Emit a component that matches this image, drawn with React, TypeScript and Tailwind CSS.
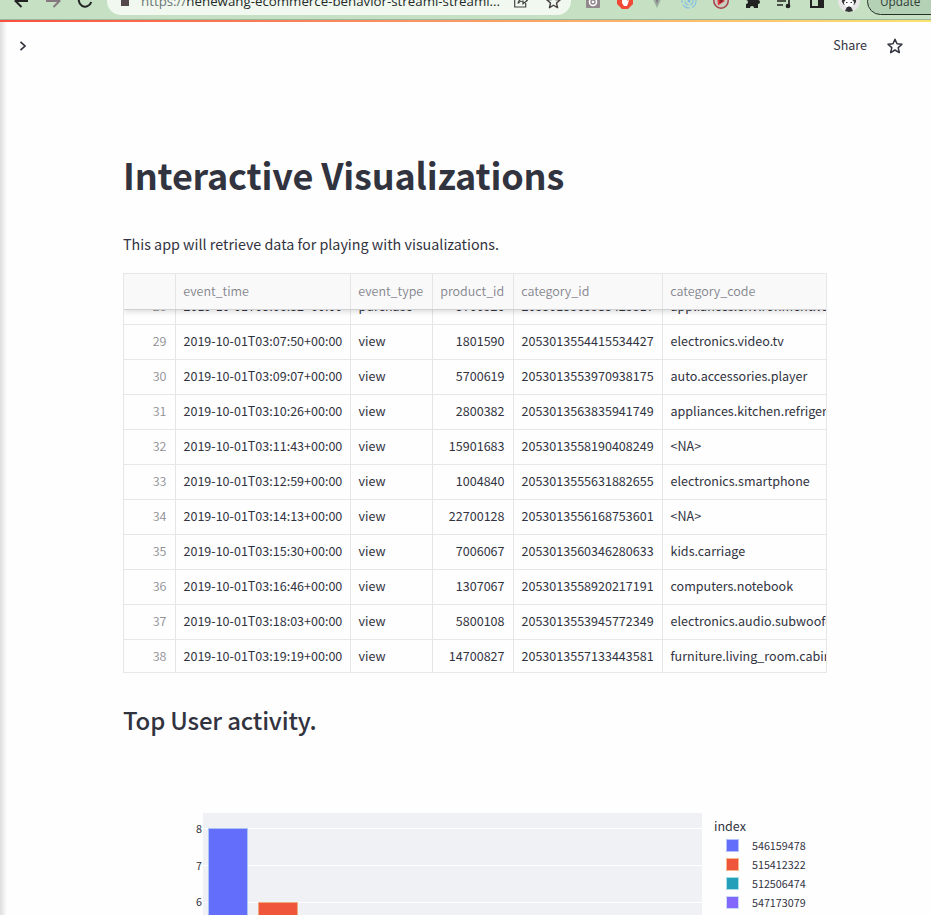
import React from "react";

const rows = [
  ["28", "2019-10-01T03:06:32+00:00", "purchase", "3700926", "2053013565983425517", "appliances.environment.vacuum"],
  ["29", "2019-10-01T03:07:50+00:00", "view", "1801590", "2053013554415534427", "electronics.video.tv"],
  ["30", "2019-10-01T03:09:07+00:00", "view", "5700619", "2053013553970938175", "auto.accessories.player"],
  ["31", "2019-10-01T03:10:26+00:00", "view", "2800382", "2053013563835941749", "appliances.kitchen.refrigerators"],
  ["32", "2019-10-01T03:11:43+00:00", "view", "15901683", "2053013558190408249", "<NA>"],
  ["33", "2019-10-01T03:12:59+00:00", "view", "1004840", "2053013555631882655", "electronics.smartphone"],
  ["34", "2019-10-01T03:14:13+00:00", "view", "22700128", "2053013556168753601", "<NA>"],
  ["35", "2019-10-01T03:15:30+00:00", "view", "7006067", "2053013560346280633", "kids.carriage"],
  ["36", "2019-10-01T03:16:46+00:00", "view", "1307067", "2053013558920217191", "computers.notebook"],
  ["37", "2019-10-01T03:18:03+00:00", "view", "5800108", "2053013553945772349", "electronics.audio.subwoofer"],
  ["38", "2019-10-01T03:19:19+00:00", "view", "14700827", "2053013557133443581", "furniture.living_room.cabinet"],
];

const legend = [
  ["546159478", "bg-[#636efa] border-[#b5c3fa]"],
  ["515412322", "bg-[#ef553b] border-[#f6b98c]"],
  ["512506474", "bg-[#239fba] border-[#a9dfe8]"],
  ["547173079", "bg-[#8269fb] border-[#c8dcfa]"],
];

const columns = "grid grid-cols-[52px_175px_82px_81px_149px_164px]";

function Star({ className }: { className: string }) {
  return (
    <svg viewBox="0 0 16 16" className={className} fill="none" stroke="currentColor" strokeWidth="1.5" strokeLinejoin="round">
      <path d="M8 1.2 10 5.8 15 6.3 11.2 9.6 12.3 14.6 8 12 3.7 14.6 4.8 9.6 1 6.3 6 5.8Z" />
    </svg>
  );
}

function BrowserBar() {
  return (
    <header className="flex h-[19px] items-end overflow-hidden bg-[#c5e0c3]">
      <div className="flex h-9 w-full shrink-0 items-center">
        <svg className="ml-[13px] h-4 w-4 shrink-0 text-[#222]" viewBox="0 0 16 16" fill="none" stroke="currentColor" strokeWidth="2">
          <path d="M15 8H3M8.5 2 2.5 8l6 6" />
        </svg>
        <svg className="ml-[17px] h-4 w-4 shrink-0 text-[#85797f]" viewBox="0 0 16 16" fill="none" stroke="currentColor" strokeWidth="2">
          <path d="M0 8h13M7.5 2l6 6-6 6" />
        </svg>
        <svg className="ml-[15px] h-4 w-4 shrink-0 text-[#222]" viewBox="0 0 16 16" fill="none" stroke="currentColor" strokeWidth="2">
          <path d="M13.5 4A6.3 6.3 0 1 0 14.2 9M14 0v5H9" />
        </svg>
        <div className="ml-[14px] flex h-7 w-[464px] shrink-0 items-center rounded-full bg-[#f0f8ef]">
          <svg className="ml-[14px] h-[14px] w-2 shrink-0 text-[#55484b]" viewBox="0 0 8 14">
            <path d="M0 5h8v7H0z" fill="currentColor" />
            <path d="M1.500 5V3a2.500 2.500 0 0 1 5 0V5" fill="none" stroke="currentColor" />
          </svg>
          <span className="ml-3 w-[360px] shrink-0 whitespace-nowrap font-['Open_Sans',sans-serif] text-[13.3px] leading-7 text-[#252a2a]">
            <span className="text-[#6b7775]">https://</span>nenewang-ecommerce-behavior-streaml-streaml...
          </span>
          <svg className="ml-[13px] h-[14px] w-[14px] shrink-0 text-[#444]" viewBox="0 0 14 14" fill="none" stroke="currentColor" strokeWidth="1.2">
            <path d="M4 3H.7v10h11V9M4 9.5c.5-3 2.5-4.5 5-4.5V2l4.2 4.5L9 9.8V7c-2.300 0-3.700.7-5 2.500Z" />
          </svg>
          <Star className="ml-[18px] h-[15px] w-[15px] shrink-0 text-[#443d40]" />
        </div>
        <svg className="ml-[15px] h-[14px] w-[14px] shrink-0" viewBox="0 0 14 14">
          <rect width="14" height="14" rx="1" fill="#91878d" />
          <circle cx="7" cy="8" r="3.5" fill="none" stroke="#fff" strokeWidth="1.500" />
          <circle cx="7" cy="8" r="1.300" fill="#fff" />
        </svg>
        <svg className="ml-[17px] h-4 w-4 shrink-0" viewBox="0 0 16 16">
          <path d="M5 0h6l5 5v6l-5 5H5l-5-5V5Z" fill="#ef4a36" />
          <path d="M5 10V3h1v4h1V2h1v5h1V3h1v5l1-1 1 .5-2 5.500H7Z" fill="#fff" />
        </svg>
        <svg className="ml-4 h-4 w-4 shrink-0" viewBox="0 0 16 16">
          <path d="M3 4h10l-5 11Z" fill="#9cad9e" />
          <path d="M6 4h4L8 11Z" fill="#807883" />
        </svg>
        <svg className="ml-4 h-4 w-4 shrink-0" viewBox="0 0 16 16" fill="none" stroke="#86c2df" strokeWidth="1.200">
          <circle cx="8" cy="8" r="7" strokeDasharray="8 2" />
          <circle cx="8" cy="8" r="4" strokeDasharray="5 1.500" />
          <circle cx="8" cy="8" r="1" fill="#397fad" />
        </svg>
        <svg className="ml-4 h-4 w-4 shrink-0" viewBox="0 0 16 16">
          <circle cx="8" cy="8" r="7.200" fill="#c9cfc0" stroke="#a8404a" strokeWidth="1.500" />
          <path d="m4 3 8 5-7 4.500Z" fill="#e23c40" />
          <path d="m6.500 5 4 3-4 2.500Z" fill="#8a222b" />
        </svg>
        <svg className="ml-4 h-4 w-4 shrink-0 text-[#222]" viewBox="0 0 16 16" fill="currentColor">
          <path d="M1 3h4a2 2 0 1 1 4 0h4v4a2 2 0 1 1 0 4v4H9a2 2 0 0 0-4 0H1v-4a2 2 0 0 0 0-4Z" />
        </svg>
        <svg className="ml-4 h-4 w-4 shrink-0 text-[#222]" viewBox="0 0 16 16" fill="none" stroke="currentColor" strokeWidth="1.700">
          <path d="M0 4h9M0 8h9M0 12h6M12 13V3h3" />
          <circle cx="11" cy="13" r="1.500" fill="currentColor" />
        </svg>
        <svg className="ml-[17px] h-[14px] w-[14px] shrink-0 text-[#222]" viewBox="0 0 14 14">
          <path d="M1 1h12v12H1z" fill="none" stroke="currentColor" strokeWidth="2" />
          <path d="M8 1h5v12H8z" fill="currentColor" />
        </svg>
        <svg className="ml-[14px] h-[22px] w-[22px] shrink-0" viewBox="0 0 22 22">
          <circle cx="11" cy="11" r="11" fill="#e8e5e7" />
          <path d="M4 12c-1-11 15-11 14 0l-2 3H6Z" fill="#37383b" />
          <ellipse cx="11" cy="13" rx="5" ry="4" fill="#fff" />
          <path d="m7 21 2-4h4l2 4-4 1Z" fill="#303135" />
          <path d="M8 12.500h1.500M12.500 12.500h1.500M11 16v3" stroke="#303135" fill="none" />
        </svg>
        <div className="ml-[7px] flex h-[27px] w-24 shrink-0 items-center rounded-full border border-[#263028] bg-[#b4d1b5] pl-3 pt-px font-['Open_Sans',sans-serif] text-[11.8px] text-[#303b35]">
          Update
        </div>
      </div>
    </header>
  );
}

function DataTable() {
  return (
    <div className="mt-[17px] h-[400px] w-[704px] overflow-hidden border border-[#e6e7e8] text-[12.54px] text-[#31333f]">
      <div className={`${columns} relative z-10 h-9 border-b border-[#d0d0d2] bg-[#f9f9fa] font-[350] leading-[33px] text-[#85868d] shadow-[0_2px_5px_rgba(0,0,0,0.13)]`}>
        {["", "event_time", "event_type", "product_id", "category_id", "category_code"].map((name, i) => (
          <div key={name} className={`overflow-hidden whitespace-nowrap pl-[7.200px] ${i < 5 ? "border-r border-[#e4e5e7]" : ""}`}>{name}</div>
        ))}
      </div>
      <div className="-mt-5">
        {rows.map((row) => (
          <div key={row[0]} className={`${columns} h-[35px] border-b border-[#e6e7e8] leading-8`}>
            {row.map((cell, i) => (
              <div
                key={i}
                className={`overflow-hidden whitespace-nowrap ${i === 0 || i === 3 ? "pr-[8.5px] text-right" : "pl-[7.5px]"} ${i === 0 ? "font-[350] text-[#8d8e94]" : ""} ${i < 5 ? "border-r border-[#e4e5e7]" : ""}`}
              >
                {cell}
              </div>
            ))}
          </div>
        ))}
      </div>
    </div>
  );
}

function ActivityChart() {
  return (
    <div className="mt-[75px] flex h-[103px] text-[10.74px] text-[#31333f]">
      <div className="w-[80px] pr-px pt-[7px] text-right leading-[18px]">
        <div className="h-[37px]">8</div>
        <div className="h-9">7</div>
        <div>6</div>
      </div>
      <svg className="h-[103px] w-[499px] shrink-0" viewBox="0 0 499 103">
        <path d="M0 0h499v103H0z" fill="#f0f1f5" />
        <path d="M0 15.500h499M0 52.500h499M0 89.500h499" stroke="#fff" />
        <path d="M5.500 110V15.500h39V110" fill="#636efa" stroke="#a9c4f5" />
        <path d="M55.500 110V89.500h39V110" fill="#ef553b" stroke="#eeaa80" />
      </svg>
      <div className="ml-3 pt-[3px]">
        <div className="h-5 text-[12.53px] leading-[19px]">index</div>
        {legend.map(([name, color]) => (
          <div key={name} className="flex h-[19px] items-center">
            <span className={`ml-3 h-[13px] w-[13px] border ${color}`} />
            <span className="ml-[13px] pt-px">{name}</span>
          </div>
        ))}
      </div>
    </div>
  );
}

export default function App() {
  return (
    <div className="h-[915px] w-[931px] overflow-hidden bg-[#fefefe] font-['Noto_Sans_CJK_SC',sans-serif] text-[#31333f]">
      <BrowserBar />
      <div className="h-px bg-[#9bb69e]" />
      <div className="h-0.5 bg-linear-to-r from-[#f9503f] via-[#fb9a66] to-[#fbe36f]" />
      <div className="flex h-[893px]">
        <div className="w-[7px] shrink-0 bg-linear-to-r from-[#dedede] to-[#fefefe]" />
        <div className="w-[924px] shrink-0">
          <nav className="flex h-[47px] items-center text-[12.53px]">
            <svg className="ml-[12px] h-3 w-2" viewBox="0 0 8 12" fill="none" stroke="currentColor" strokeWidth="1.7">
              <path d="m1.500 1.800 4.500 4.200-4.500 4.200" />
            </svg>
            <span className="ml-auto">Share</span>
            <Star className="ml-5 mr-[28px] h-4 w-4" />
          </nav>
          <main className="ml-[116px] w-[704px]">
            <h1 className="pt-[75px] text-[36px] font-bold leading-[60px] tracking-[-0.18px]">Interactive Visualizations</h1>
            <p className="mt-7 text-[14.32px] leading-6">This app will retrieve data for playing with visualizations.</p>
            <DataTable />
            <h2 className="mt-[29px] text-[24px] font-medium leading-9 tracking-[-0.18px]">Top User activity.</h2>
            <ActivityChart />
          </main>
        </div>
      </div>
    </div>
  );
}
